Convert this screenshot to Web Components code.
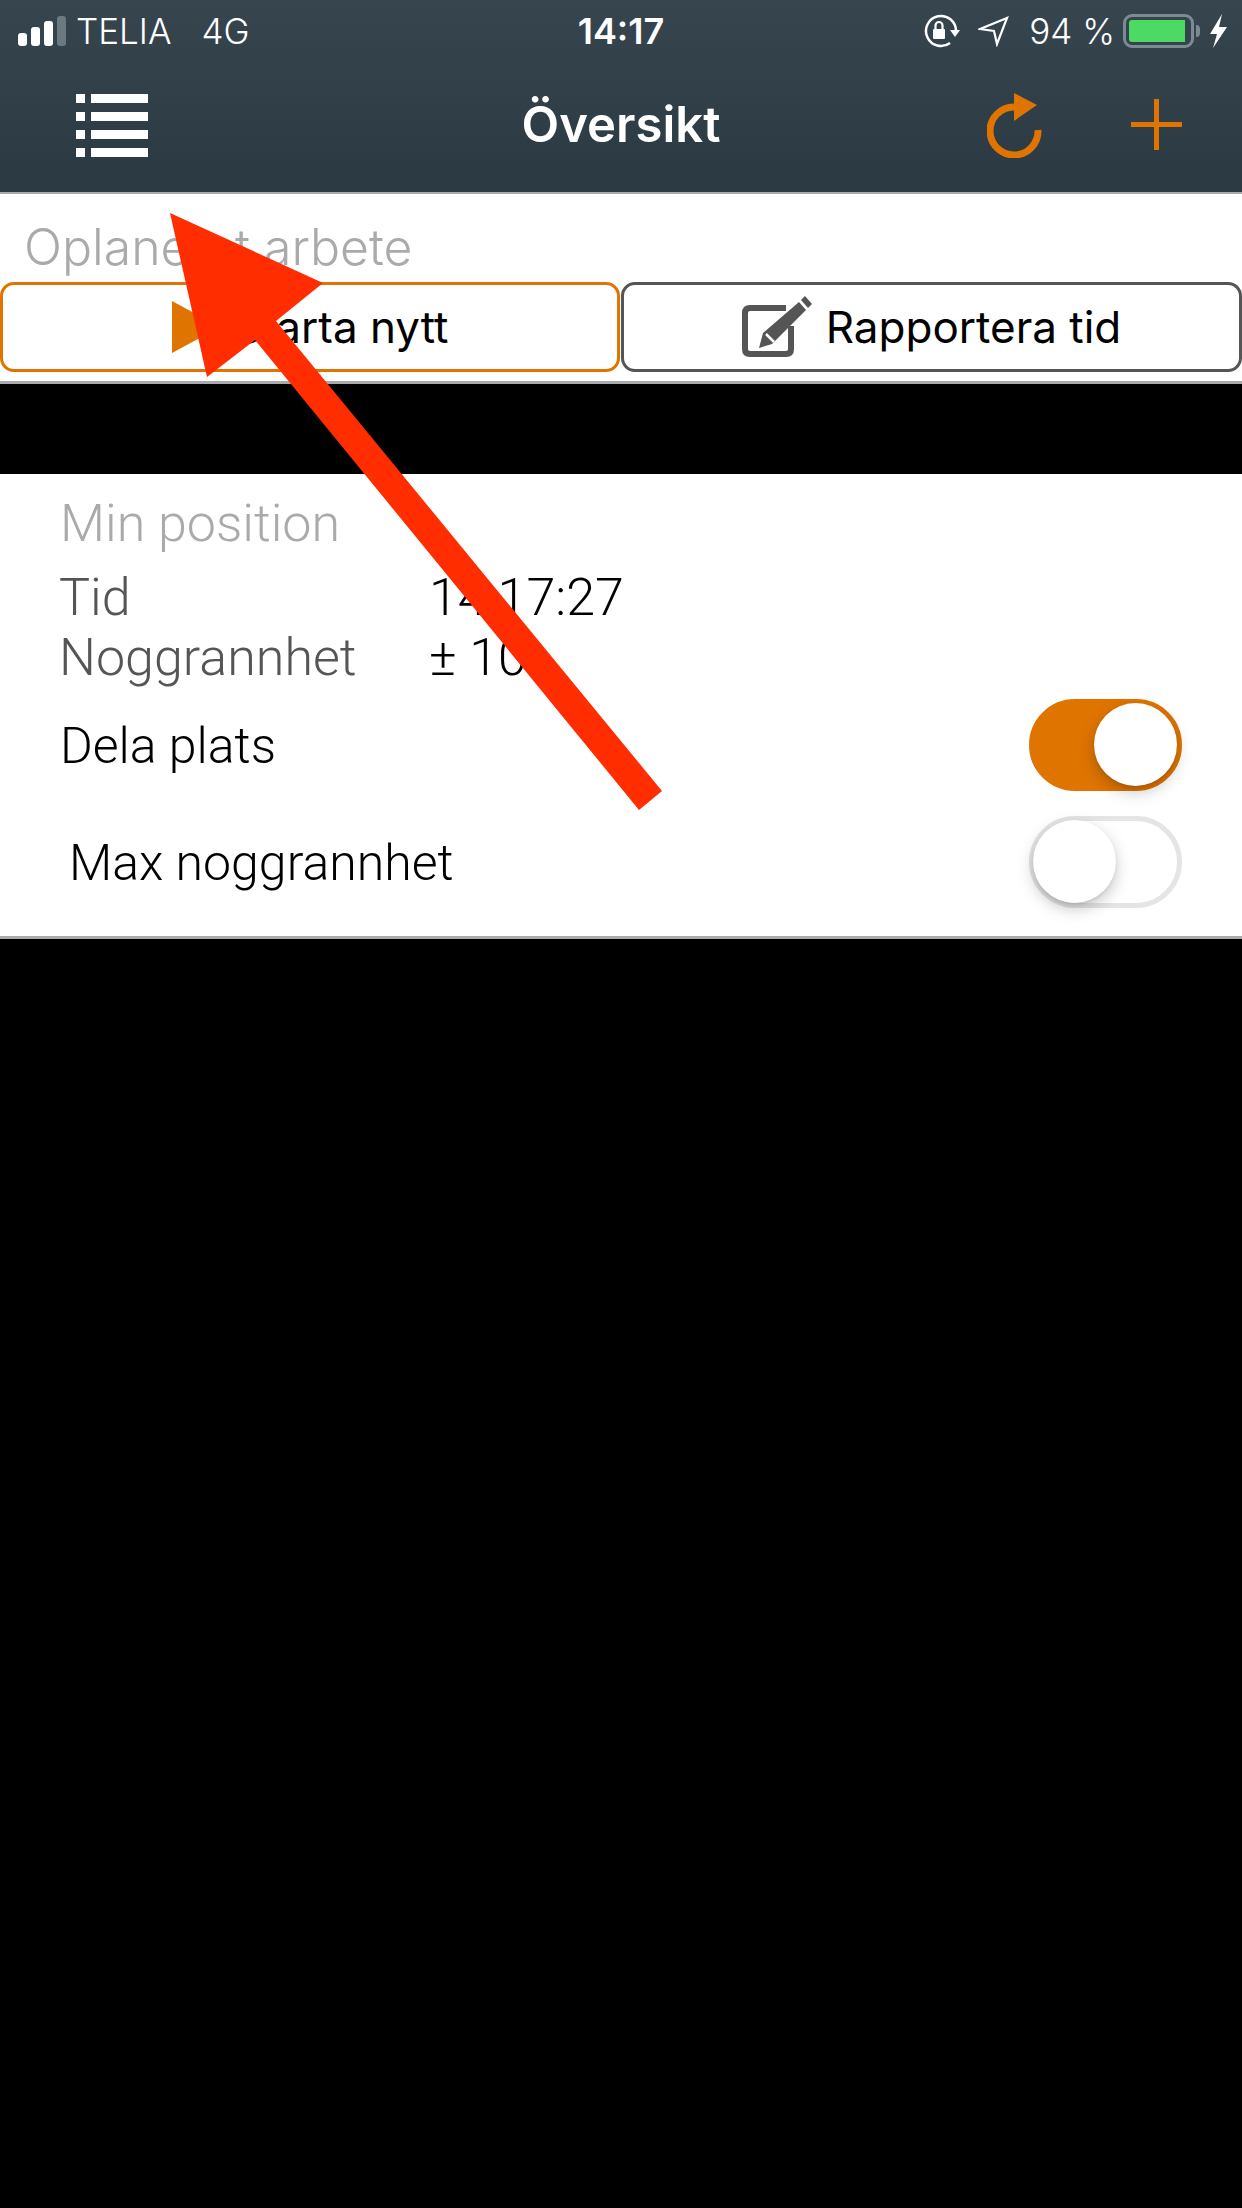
<!DOCTYPE html>
<html>
<head>
<meta charset="utf-8">
<title>Översikt</title>
<style>
    html, body { margin: 0; background: #000; }
    body { position: relative; height: 2208px; overflow: hidden; font-family: Inter, "Liberation Sans", sans-serif; }
    .arrow { position: absolute; left: 0; top: 0; }
</style>
</head>
<body>
<app-header title="Översikt"></app-header>
<plan-card title="Oplanerat arbete">
    <action-button color="#e07400" icon="play">Starta nytt</action-button>
    <action-button color="#555" icon="edit">Rapportera tid</action-button>
</plan-card>
<position-card title="Min position">
    <info-row label="Tid">14:17:27</info-row>
    <info-row label="Noggrannhet">± 10</info-row>
    <toggle-row on>Dela plats</toggle-row>
    <toggle-row indent>Max noggrannhet</toggle-row>
</position-card>

<svg class="arrow" width="1242" height="820" viewBox="0 0 1242 820">
    <polygon fill="#ff2d00" points="170,213 323,283 276,321 662,791 639,810 255,340 207,377"/>
</svg>

<script>
const hostFont = `font-family: Inter, "Liberation Sans", sans-serif;`

class AppHeader extends HTMLElement {
    constructor () {
        super();
        const shadow = this.attachShadow({ mode: "open" })
        shadow.innerHTML = `
        <style>
            :host { display: block; height: 192px; border-bottom: 2px solid #aaa; background: linear-gradient(#37454f, #2b3942); color: #fff; ${hostFont} }
            .status { display: flex; align-items: center; height: 62px; position: relative; font-size: 35px; font-weight: 300; }
            .signal { display: flex; align-items: flex-end; gap: 4px; height: 30px; margin-left: 18px; }
            .signal i { width: 9px; border-radius: 3px; background: #fff; }
            .carrier { margin-left: 10px; }
            .net { margin-left: 30px; }
            .clock { position: absolute; left: 0; right: 0; text-align: center; font-weight: 600; font-size: 36px; }
            .right { margin-left: auto; display: flex; align-items: center; }
            .bar { display: flex; align-items: center; height: 125px; position: relative; }
            h1 { position: absolute; left: 0; right: 0; margin: 0; text-align: center; font-size: 49px; font-weight: 600; }
            .spacer { flex: 1; }
            svg { display: block; flex: none; }
        </style>
        <div class="status">
            <div class="signal"><i style="height:13px"></i><i style="height:19px"></i><i style="height:25px"></i><i style="height:30px;background:#6c7980"></i></div>
            <span class="carrier">TELIA</span>
            <span class="net">4G</span>
            <span class="clock">14:17</span>
            <div class="right">
                <svg width="36" height="34" viewBox="0 0 36 34" style="margin-right:18px">
                    <path d="M32 17 A15 15 0 1 0 26 29" fill="none" stroke="#fff" stroke-width="2.5"/>
                    <polygon points="26,16 36,16 31,23" fill="#fff"/>
                    <rect x="9" y="15" width="12" height="10" rx="1" fill="#fff"/>
                    <path d="M11.500 15 V11.500 A3.500 3.500 0 0 1 18.500 11.500 V15" fill="none" stroke="#fff" stroke-width="2.200"/>
                </svg>
                <svg width="32" height="32" viewBox="0 0 32 32" style="margin-right:19px">
                    <path d="M2 14 L29 3 L19 29 L16 16 Z" fill="none" stroke="#fff" stroke-width="2.200" stroke-linejoin="miter"/>
                </svg>
                <span style="margin-right:8px;white-space:nowrap">94 %</span>
                <div style="width:71px;height:34px;box-sizing:border-box;border:3px solid #7c8a92;border-radius:9px;padding:3px;display:flex">
                    <div style="width:56px;background:#4cd964;border-radius:3px 0 0 3px"></div>
                </div>
                <div style="width:4px;height:12px;background:#7c8a92;border-radius:0 4px 4px 0;margin:0 9px 0 2px"></div>
                <svg width="19" height="34" viewBox="0 0 19 34" style="margin-right:14px">
                    <polygon points="13,0 1,20 8,20 4,34 18,13 10,13" fill="#fff"/>
                </svg>
            </div>
        </div>
        <div class="bar">
            <svg width="72" height="63" viewBox="0 0 72 63" style="margin-left:76px;margin-top:2px">
                <g fill="#fff">
                    <rect x="0" y="0" width="9" height="9"/><rect x="15" y="0" width="57" height="9"/>
                    <rect x="0" y="18" width="9" height="9"/><rect x="15" y="18" width="57" height="9"/>
                    <rect x="0" y="36" width="9" height="9"/><rect x="15" y="36" width="57" height="9"/>
                    <rect x="0" y="54" width="9" height="9"/><rect x="15" y="54" width="57" height="9"/>
                </g>
            </svg>
            <h1></h1>
            <div class="spacer"></div>
            <svg width="56" height="65" viewBox="0 0 56 65" style="margin-right:88px;margin-top:2px">
                <path d="M51 37 A24 24 0 1 1 27 14" fill="none" stroke="#e07400" stroke-width="7"/>
                <polygon points="27,0 50,12 27,28" fill="#e07400"/>
            </svg>
            <svg width="51" height="51" viewBox="0 0 51 51" style="margin-right:60px">
                <path d="M25.500 0 V51 M0 25.500 H51" stroke="#e07400" stroke-width="5" fill="none"/>
            </svg>
        </div>`
        shadow.querySelector("h1").textContent = this.getAttribute("title")
    }
}

class PlanCard extends HTMLElement {
    constructor () {
        super();
        const shadow = this.attachShadow({ mode: "open" })
        shadow.innerHTML = `
        <style>
            :host { display: block; height: 190px; box-sizing: border-box; background: #fff; border-bottom: 3px solid #aaa; ${hostFont} }
            h2 { margin: 0; padding: 22px 0 4px 24px; height: 62px; line-height: 62px; font-size: 50px; font-weight: 300; color: #aaa; }
            .buttons { display: grid; grid-template-columns: 620px 621px; gap: 1px; }
        </style>
        <h2></h2>
        <div class="buttons"><slot></slot></div>`
        shadow.querySelector("h2").textContent = this.getAttribute("title")
    }
}

const buttonIcons = {
    play: `<svg width="48" height="52" viewBox="0 0 48 52"><polygon points="0,0 48,26 0,52" fill="#e07400"/></svg>`,
    edit: `<svg width="70" height="62" viewBox="0 0 70 62">
        <path d="M44 12 H8 Q3 12 3 17 V53 Q3 58 8 58 H44 Q49 58 49 53 V30" fill="none" stroke="#555" stroke-width="6"/>
        <polygon points="21,37 57,6 64,14 30,48 17,52" fill="#555" transform="translate(0,0)"/>
        <polygon points="59,4 63,0 70,8 66,12" fill="#555"/>
        <path d="M24 38 L32 46" stroke="#fff" stroke-width="2.500"/>
    </svg>`
}

class ActionButton extends HTMLElement {
    constructor () {
        super();
        const shadow = this.attachShadow({ mode: "open" })
        const color = this.getAttribute("color")
        shadow.innerHTML = `
        <style>
            :host { display: flex; align-items: center; justify-content: center; gap: 14px; height: 90px; box-sizing: border-box; border: 3px solid ${color}; border-radius: 14px; color: #000; font-size: 44px; ${hostFont} }
            svg { display: block; }
        </style>
        ${buttonIcons[this.getAttribute("icon")]}
        <slot></slot>`
    }
}

class PositionCard extends HTMLElement {
    constructor () {
        super();
        const shadow = this.attachShadow({ mode: "open" })
        shadow.innerHTML = `
        <style>
            :host { display: block; margin-top: 90px; height: 465px; box-sizing: border-box; background: #fff; border-bottom: 3px solid #aaa; padding-top: 19px; font-family: Roboto, "Liberation Sans", sans-serif; font-weight: 300; }
            h2 { margin: 0 0 11px 60px; height: 62px; line-height: 62px; font-size: 52px; font-weight: 300; color: #aaa; }
        </style>
        <h2></h2>
        <slot></slot>`
        shadow.querySelector("h2").textContent = this.getAttribute("title")
    }
}

class InfoRow extends HTMLElement {
    constructor () {
        super();
        const shadow = this.attachShadow({ mode: "open" })
        shadow.innerHTML = `
        <style>
            :host { display: grid; grid-template-columns: 370px 1fr; height: 60px; line-height: 64px; padding-left: 59px; font-size: 52px; color: #000; }
            span { color: #555; }
        </style>
        <span></span><div><slot></slot></div>`
        shadow.querySelector("span").textContent = this.getAttribute("label")
    }
}

class ToggleSwitch extends HTMLElement {
    constructor () {
        super();
        const shadow = this.attachShadow({ mode: "open" })
        shadow.innerHTML = `
        <style>
            :host { display: block; position: relative; width: 153px; height: 92px; box-sizing: border-box; border-radius: 46px; border: 5px solid #e5e5e5; background: #fff; }
            :host([on]) { background: #e07400; border-color: #e07400; }
            .knob { position: absolute; left: -1px; top: -1px; width: 83px; height: 83px; border-radius: 50%; background: #fff; box-shadow: 0 6px 16px rgba(0,0,0,.22), 0 2px 3px rgba(0,0,0,.08); }
            :host([on]) .knob { left: 60px; }
        </style>
        <div class="knob"></div>`
    }
}

class ToggleRow extends HTMLElement {
    constructor () {
        super();
        const shadow = this.attachShadow({ mode: "open" })
        shadow.innerHTML = `
        <style>
            :host { display: flex; align-items: center; justify-content: space-between; height: 117px; padding: 0 60px 0 60px; font-size: 50px; color: #000; }
            :host([indent]) { padding-left: 69px; }
            div { padding-top: 3px; }
        </style>
        <div><slot></slot></div>
        <toggle-switch></toggle-switch>`
        if (this.hasAttribute("on")) shadow.querySelector("toggle-switch").setAttribute("on", "")
    }
}

customElements.define("app-header", AppHeader);
customElements.define("plan-card", PlanCard);
customElements.define("action-button", ActionButton);
customElements.define("position-card", PositionCard);
customElements.define("info-row", InfoRow);
customElements.define("toggle-switch", ToggleSwitch);
customElements.define("toggle-row", ToggleRow);
</script>
</body>
</html>
